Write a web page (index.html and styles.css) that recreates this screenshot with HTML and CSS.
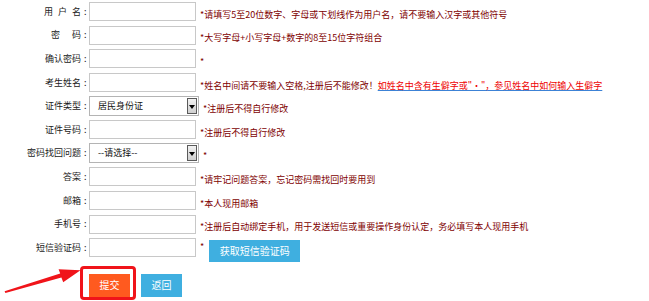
FILE: index.html
```html
<!DOCTYPE html>
<html lang="zh-CN">
<head>
<meta charset="utf-8">
<title>注册</title>
<link rel="stylesheet" href="styles.css">
</head>
<body>
<div class="page">
  <div class="form">
    <div class="row">
      <div class="label"><span class="ls5">用户</span>名</div><span class="colon">:</span>
      <div class="input"></div>
      <div class="hint">*请填写5至20位数字、字母或下划线作为用户名，请不要输入汉字或其他符号</div>
    </div>
    <div class="row">
      <div class="label"><span class="ls12">密</span>码</div><span class="colon">:</span>
      <div class="input"></div>
      <div class="hint">*大写字母+小写字母+数字的8至15位字符组合</div>
    </div>
    <div class="row">
      <div class="label">确认密码</div><span class="colon">:</span>
      <div class="input"></div>
      <div class="hint">*</div>
    </div>
    <div class="row">
      <div class="label">考生姓名</div><span class="colon">:</span>
      <div class="input"></div>
      <div class="hint">*姓名中间请不要输入空格,注册后不能修改！<a class="link" href="#">如姓名中含有生僻字或"·"，参见姓名中如何输入生僻字</a></div>
    </div>
    <div class="row">
      <div class="label">证件类型</div><span class="colon">:</span>
      <div class="select"><span class="sel-text">居民身份证</span><span class="sel-arrow"><i class="tri"></i></span></div>
      <div class="hint">*注册后不得自行修改</div>
    </div>
    <div class="row">
      <div class="label">证件号码</div><span class="colon">:</span>
      <div class="input"></div>
      <div class="hint">*注册后不得自行修改</div>
    </div>
    <div class="row">
      <div class="label">密码找回问题</div><span class="colon">:</span>
      <div class="select"><span class="sel-text">--请选择--</span><span class="sel-arrow"><i class="tri"></i></span></div>
      <div class="hint">*</div>
    </div>
    <div class="row">
      <div class="label">答案</div><span class="colon">:</span>
      <div class="input"></div>
      <div class="hint">*请牢记问题答案，忘记密码需找回时要用到</div>
    </div>
    <div class="row">
      <div class="label">邮箱</div><span class="colon">:</span>
      <div class="input"></div>
      <div class="hint">*本人现用邮箱</div>
    </div>
    <div class="row">
      <div class="label">手机号</div><span class="colon">:</span>
      <div class="input"></div>
      <div class="hint">*注册后自动绑定手机，用于发送短信或重要操作身份认定，务必填写本人现用手机</div>
    </div>
    <div class="row">
      <div class="label">短信验证码</div><span class="colon">:</span>
      <div class="input"></div>
      <div class="hint star">*</div>
      <div class="btn btn-sms">获取短信验证码</div>
    </div>
    <div class="actions">
      <div class="highlight"><div class="btn btn-submit">提交</div></div>
      <div class="btn btn-back">返回</div>
    </div>
  </div>
  <svg class="arrow" width="84" height="40" viewBox="0 0 84 40">
    <polygon points="4.6,29.3 60.2,11.6 58.6,7.2 80.5,8.2 63.2,20.2 61.4,15.6 5.4,31.0" fill="#f0141a"/>
  </svg>
</div>
</body>
</html>
```
FILE: styles.css
```css
html, body {
  margin: 0;
  padding: 0;
  background: #fff;
}
body {
  font-family: "Noto Sans CJK SC", "Noto Sans", sans-serif;
  font-size: 9px;
  line-height: 12px;
  color: #1a1a1a;
}
.page {
  position: relative;
  width: 649px;
  height: 301px;
  overflow: hidden;
}
.form {
  display: flex;
  flex-direction: column;
}
.row {
  display: flex;
  align-items: center;
  height: 23.6px;
}
.label {
  width: 81px;
  text-align: right;
  white-space: nowrap;
  color: #1a1a1a;
}
.ls5 { letter-spacing: 5px; }
.ls12 { letter-spacing: 12px; }
.colon {
  width: 5px;
  padding-left: 3px;
  color: #1a1a1a;
}
.input {
  width: 107px;
  height: 19px;
  box-sizing: border-box;
  border: 1px solid #c8c8c8;
  background: #fff;
}
.select {
  width: 110px;
  height: 20px;
  box-sizing: border-box;
  border: 1px solid #b4b4b4;
  display: flex;
  align-items: center;
  padding: 0 1px 0 8px;
  background: #fff;
  color: #111;
}
.sel-text {
  flex: 1;
  white-space: nowrap;
}
.sel-arrow {
  width: 10px;
  height: 16px;
  box-sizing: border-box;
  border: 1px solid #5a5a5a;
  background: linear-gradient(#f2f2f2, #cfcfcf);
  display: flex;
  align-items: center;
  justify-content: center;
}
.tri {
  display: block;
  width: 0;
  height: 0;
  border-left: 3px solid transparent;
  border-right: 3px solid transparent;
  border-top: 4px solid #000;
  margin-top: 1px;
}
.hint {
  margin-left: 4px;
  margin-top: 6px;
  color: #800000;
  white-space: nowrap;
}
.hint.star {
  margin-top: 0;
  margin-bottom: 2px;
}
.link {
  color: #ee0000;
  text-decoration: underline;
  text-decoration-color: #3c82d6;
}
.btn {
  display: flex;
  align-items: center;
  justify-content: center;
  color: #fff;
  font-size: 10px;
  white-space: nowrap;
}
.btn-sms {
  margin-left: 5px;
  margin-top: 7px;
  width: 91px;
  height: 22px;
  background: #3fafe0;
}
.actions {
  display: flex;
  align-items: center;
  margin-top: 6.4px;
  margin-left: 80px;
}
.highlight {
  border: 3px solid #f0141a;
  border-radius: 4px;
  padding: 5px 3px 0 6px;
}
.btn-submit {
  width: 41px;
  height: 23px;
  background: #ff5a1f;
}
.btn-back {
  margin-left: 5px;
  margin-top: 5px;
  width: 41px;
  height: 23px;
  background: #3fafe0;
}
.arrow {
  position: absolute;
  left: 0;
  top: 262px;
}
```
